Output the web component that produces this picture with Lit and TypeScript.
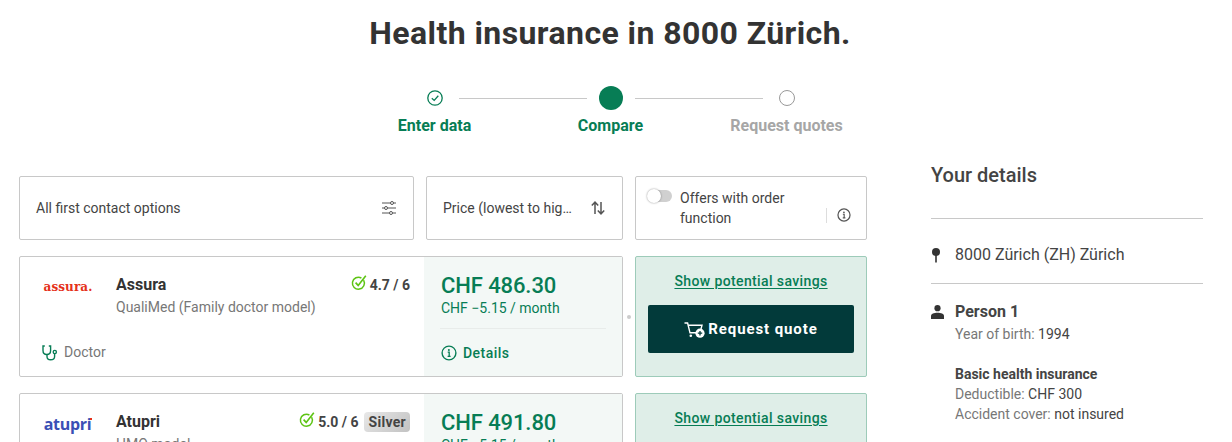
import { LitElement, css, html, svg } from "lit";
import { customElement } from "lit/decorators.js";

type Offer = {
  logo: string;
  logoClass: string;
  name: string;
  plan: string;
  score: string;
  badge?: string;
  price: string;
  saving: string;
};

const OFFERS: Offer[] = [
  {
    logo: "assura.",
    logoClass: "assura",
    name: "Assura",
    plan: "QualiMed (Family doctor model)",
    score: "4.7 / 6",
    price: "CHF 486.30",
    saving: "CHF −5.15 / month",
  },
  {
    logo: "atupri",
    logoClass: "atupri",
    name: "Atupri",
    plan: "HMO model",
    score: "5.0 / 6",
    badge: "Silver",
    price: "CHF 491.80",
    saving: "CHF −5.15 / month",
  },
];

const infoIcon = (size: number) => svg`
  <svg width=${size} height=${size} viewBox="0 0 16 16" fill="none" stroke="currentColor">
    <circle cx="8" cy="8" r="6.9" stroke-width="1.4"></circle>
    <path d="M6.7 7.2H8.2V11.2M6.6 11.3H9.6" stroke-width="1.3"></path>
    <circle cx="7.9" cy="4.9" r="1" fill="currentColor" stroke="none"></circle>
  </svg>`;

const scoreIcon = svg`
  <svg class="score-icon" width="16" height="16" viewBox="0 0 16 16" fill="none" stroke="#5dc413">
    <path d="M12.6 5.2A6 6 0 1 1 10.4 3" stroke-width="1.5"></path>
    <path d="M4.6 7.6L7.2 10.4L14.8 .8" stroke-width="1.6"></path>
  </svg>`;

@customElement("app-root")
export class AppRoot extends LitElement {
  static styles = css`
    :host {
      display: block;
      height: 442px;
      overflow: hidden;
      background: #fff;
      color: #333;
      font-family: Roboto, sans-serif;
      font-size: 14px;
    }
    .page {
      width: 1184px;
      margin-left: 19px;
    }
    h1 {
      margin: 0;
      padding-top: 14px;
      font-size: 32px;
      line-height: 38px;
      font-weight: 700;
      letter-spacing: 0.42px;
      text-align: center;
      transform: translateX(-1px);
    }
    .stepper {
      display: grid;
      grid-template-columns: 48px 128px 48px 128px 48px;
      justify-content: center;
      align-items: center;
      margin-top: 34px;
      grid-template-rows: 24px auto;
      row-gap: 6px;
      color: #077d55;
    }
    .line {
      height: 1px;
      background: #c8c8c8;
    }
    .slot {
      display: flex;
      justify-content: center;
    }
    .dot {
      width: 24px;
      height: 24px;
      border-radius: 50%;
      background: #077d55;
    }
    .ring {
      box-sizing: border-box;
      width: 16px;
      height: 16px;
      border-radius: 50%;
      border: 1.3px solid #999;
    }
    .label {
      justify-self: center;
      margin-right: 1px;
      white-space: nowrap;
      font-weight: 700;
      font-size: 16px;
      line-height: 20px;
    }
    .label.todo {
      color: #a6a6a6;
    }
    .layout {
      display: grid;
      grid-template-columns: 848px 272px;
      column-gap: 64px;
      margin-top: 40px;
    }
    .filters {
      display: grid;
      grid-template-columns: 395px 197px 232px;
      column-gap: 12px;
      height: 64px;
    }
    .filter {
      box-sizing: border-box;
      display: flex;
      align-items: center;
      justify-content: space-between;
      padding: 0 16px;
      border: 1px solid #c8c8c8;
      border-radius: 2px;
      color: #444;
    }
    .filter svg {
      flex: none;
      color: #555;
    }
    .truncate {
      overflow: hidden;
      white-space: nowrap;
      text-overflow: ellipsis;
      width: 131px;
    }
    .filter.toggle {
      display: grid;
      grid-template-columns: 26px 1fr auto;
      column-gap: 7px;
      align-items: start;
      padding: 11px 15px 0 11px;
      line-height: 20px;
    }
    .switch {
      position: relative;
      width: 24px;
      height: 12px;
      margin: 2px 0 0 1px;
      border-radius: 6px;
      background: #d0d0d0;
    }
    .switch::before {
      content: "";
      position: absolute;
      left: -1px;
      top: -1px;
      width: 14px;
      height: 14px;
      border-radius: 50%;
      background: #fff;
      box-shadow: 0 0 2px rgba(0, 0, 0, 0.45);
    }
    .info-col {
      display: flex;
      align-items: center;
      gap: 10px;
      margin-top: 17px;
      height: 20px;
    }
    .divider {
      width: 1px;
      height: 15px;
      background: #ddd;
    }
    .card {
      display: grid;
      grid-template-columns: 604px 232px;
      column-gap: 12px;
      margin-top: 16px;
      height: 121px;
    }
    .offer {
      box-sizing: border-box;
      display: grid;
      grid-template-columns: 404px 1fr;
      border: 1px solid #c8c8c8;
      border-radius: 2px;
      height: 121px;
    }
    .summary {
      display: grid;
      grid-template-columns: 96px 1fr;
      grid-template-rows: 58px 1fr;
      padding: 16px 14px 15px 0;
      position: relative;
    }
    .logo {
      justify-self: center;
      white-space: nowrap;
    }
    .assura {
      padding-top: 5px;
      color: #e5311a;
      font-family: "DejaVu Serif", serif;
      font-size: 12px;
      font-weight: 700;
      line-height: 18px;
      letter-spacing: 0.1px;
    }
    .atupri {
      padding-top: 3px;
      color: #3a4fb5;
      font-family: "Open Sans", sans-serif;
      font-size: 16px;
      font-weight: 700;
      line-height: 22px;
      letter-spacing: -0.3px;
    }
    .atupri::after {
      content: "";
      display: inline-block;
      width: 2px;
      height: 2px;
      margin-left: -1px;
      vertical-align: 10px;
      background: #e5311a;
    }
    .head-row {
      display: flex;
      justify-content: space-between;
      align-items: center;
      height: 24px;
      margin: -1px 0 1px;
    }
    .name {
      font-size: 16px;
      font-weight: 700;
    }
    .score {
      display: flex;
      align-items: center;
      gap: 3px;
      padding-top: 2px;
      font-weight: 700;
      color: #444;
    }
    .score-icon {
      margin-top: -5px;
    }
    .badge {
      margin-left: 3px;
      padding: 1px 4px;
      border-radius: 4px;
      background: linear-gradient(135deg, #e8e8e8, #c2c2c2);
      line-height: 18px;
      letter-spacing: 0.3px;
    }
    .plan {
      font-size: 14px;
      line-height: 20px;
      color: #777;
    }
    .contact {
      grid-column: 1 / 3;
      display: flex;
      align-items: flex-end;
      gap: 6px;
      padding-left: 22px;
      font-size: 14px;
      line-height: 18px;
      color: #777;
    }
    .contact svg {
      color: #077d55;
    }
    .pricing {
      padding: 14px 16px 0;
      background: #f3f8f6;
      color: #077d55;
    }
    .price {
      padding-left: 1px;
      font-size: 22px;
      line-height: 30px;
      font-weight: 500;
      letter-spacing: -0.1px;
    }
    .saving {
      padding-left: 1px;
      font-size: 14px;
      line-height: 20px;
      margin-top: -3px;
    }
    .rule {
      height: 1px;
      margin: 10px 0 0;
      background: #e8ecea;
    }
    .details {
      display: flex;
      align-items: center;
      gap: 6px;
      margin-top: 13px;
      padding-left: 1px;
      font-weight: 500;
      letter-spacing: 0.45px;
      line-height: 22px;
    }
    .cta {
      position: relative;
      box-sizing: border-box;
      height: 121px;
      padding: 14px 12px 0;
      background: #dfeee8;
      border: 1px solid #9dcbb9;
      border-radius: 2px;
      text-align: center;
    }
    .cta::before {
      content: "";
      position: absolute;
      left: -9px;
      top: 58px;
      width: 4px;
      height: 4px;
      border-radius: 50%;
      background: #ccc;
    }
    .savings {
      display: block;
      color: #077d55;
      font-weight: 500;
      letter-spacing: 0.38px;
      line-height: 20px;
      text-decoration: underline;
      text-underline-offset: 2px;
    }
    .request {
      display: flex;
      align-items: center;
      justify-content: center;
      gap: 3px;
      height: 48px;
      margin-top: 14px;
      border-radius: 2px;
      background: #023a3a;
      color: #fff;
      font-size: 15px;
      font-weight: 700;
      letter-spacing: 0.9px;
    }
    .request svg {
      margin-top: 1px;
    }
    aside h2 {
      margin: -13px 0 0;
      font-size: 20px;
      line-height: 24px;
      font-weight: 500;
      color: #444;
    }
    .sep {
      height: 1px;
      background: #c8c8c8;
    }
    .sep.first {
      margin-top: 31px;
    }
    .row {
      display: grid;
      grid-template-columns: 24px 1fr;
    }
    .row svg {
      color: #333;
    }
    .place {
      padding: 25px 0 17px;
      font-size: 16px;
      line-height: 22px;
      align-items: center;
      color: #444;
    }
    .person {
      padding-top: 16px;
      line-height: 20px;
      font-size: 14px;
      color: #444;
    }
    .person b {
      display: block;
      font-weight: 700;
    }
    .person .title {
      font-size: 16px;
      line-height: 24px;
    }
    .person .muted {
      color: #777;
    }
    .person .block {
      margin-top: 20px;
    }
    .person .icon {
      padding-top: 4px;
    }
  `;

  private renderOffer(offer: Offer) {
    return html`
      <div class="card">
        <div class="offer">
          <div class="summary">
            <div class="logo ${offer.logoClass}">${offer.logo}</div>
            <div>
              <div class="head-row">
                <span class="name">${offer.name}</span>
                <span class="score">
                  ${scoreIcon} ${offer.score}
                  ${offer.badge ? html`<span class="badge">${offer.badge}</span>` : null}
                </span>
              </div>
              <div class="plan">${offer.plan}</div>
            </div>
            <div class="contact">
              <svg width="16" height="16" viewBox="0 0 16 16" fill="none" stroke="currentColor" stroke-width="1.4">
                <path d="M2.8 1H1V5.5C1 8 2.8 9.5 4.8 9.5S8.6 8 8.6 5.5V1H6.8"></path>
                <path d="M5 9.5V11.5C5 13.6 6.6 14.8 8.6 14.8S12.6 13.6 12.6 11.5V8.8"></path>
                <circle cx="12.8" cy="7" r="1.6"></circle>
              </svg>
              Doctor
            </div>
          </div>
          <div class="pricing">
            <div class="price">${offer.price}</div>
            <div class="saving">${offer.saving}</div>
            <div class="rule"></div>
            <div class="details">${infoIcon(16)} Details</div>
          </div>
        </div>
        <div class="cta">
          <a class="savings">Show potential savings</a>
          <div class="request">
            <svg width="21" height="16" viewBox="0 0 21 16" fill="none" stroke="#fff" stroke-width="1.4">
              <path d="M.5 1H3.6L6 10.8H12"></path>
              <path d="M4.2 3.2H18L17 7"></path>
              <circle cx="6.8" cy="13.8" r="1.3" fill="#fff" stroke="none"></circle>
              <circle cx="16" cy="11.2" r="4.6" fill="#fff" stroke="none"></circle>
              <path d="M13.8 11.2H18.2M16 9V13.4" stroke="#023a3a" stroke-width="1.3"></path>
            </svg>
            Request quote
          </div>
        </div>
      </div>
    `;
  }

  render() {
    return html`
      <div class="page">
        <h1>Health insurance in 8000 Zürich.</h1>
        <div class="stepper">
          <div class="slot">
            <svg width="16" height="16" viewBox="0 0 16 16" fill="none" stroke="#077d55" stroke-width="1.3">
              <circle cx="8" cy="8" r="7.2"></circle>
              <path d="M4.8 8.2L7.2 10.4L11.3 5.8"></path>
            </svg>
          </div>
          <div class="line"></div>
          <div class="slot"><div class="dot"></div></div>
          <div class="line"></div>
          <div class="slot"><div class="ring"></div></div>
          <div class="label" style="grid-column: 1">Enter data</div>
          <div class="label" style="grid-column: 3">Compare</div>
          <div class="label todo" style="grid-column: 5">Request quotes</div>
        </div>
        <div class="layout">
          <main>
            <div class="filters">
              <div class="filter">
                All first contact options
                <svg width="16" height="16" viewBox="0 0 16 16" fill="none" stroke="currentColor" stroke-width="1">
                  <path d="M1 3H9.5M12.5 3H15M1 8H3.5M6.5 8H15M1 13H8.5M11.5 13H15"></path>
                  <circle cx="11" cy="3" r="1.5"></circle>
                  <circle cx="5" cy="8" r="1.5"></circle>
                  <circle cx="10" cy="13" r="1.5"></circle>
                </svg>
              </div>
              <div class="filter">
                <span class="truncate">Price (lowest to highest)</span>
                <svg width="16" height="16" viewBox="0 0 16 16" fill="none" stroke="currentColor" stroke-width="1.5">
                  <path d="M5 14V2.5M1.8 5.5L5 2.2L8.2 5.5"></path>
                  <path d="M11 2V13.5M7.8 10.5L11 13.8L14.2 10.5"></path>
                </svg>
              </div>
              <div class="filter toggle">
                <div class="switch"></div>
                <div>Offers with order function</div>
                <div class="info-col"><div class="divider"></div>${infoIcon(14)}</div>
              </div>
            </div>
            ${OFFERS.map((offer) => this.renderOffer(offer))}
          </main>
          <aside>
            <h2>Your details</h2>
            <div class="sep first"></div>
            <div class="row place">
              <svg width="10" height="15" viewBox="0 0 10 15" fill="currentColor">
                <circle cx="5" cy="4" r="4"></circle>
                <rect x="4.2" y="7" width="1.6" height="7.5"></rect>
              </svg>
              <span>8000 Zürich (ZH) Zürich</span>
            </div>
            <div class="sep"></div>
            <div class="row person">
              <div class="icon">
                <svg width="13" height="14" viewBox="0 0 13 14" fill="currentColor">
                  <circle cx="6.5" cy="3.2" r="3.1"></circle>
                  <path d="M0 14V11C0 9 3 7.8 6.5 7.8S13 9 13 11V14Z"></path>
                </svg>
              </div>
              <div>
                <b class="title">Person 1</b>
                <div><span class="muted">Year of birth:</span> 1994</div>
                <div class="block">
                  <b>Basic health insurance</b>
                  <div><span class="muted">Deductible:</span> CHF 300</div>
                  <div><span class="muted">Accident cover:</span> not insured</div>
                </div>
              </div>
            </div>
          </aside>
        </div>
      </div>
    `;
  }
}
